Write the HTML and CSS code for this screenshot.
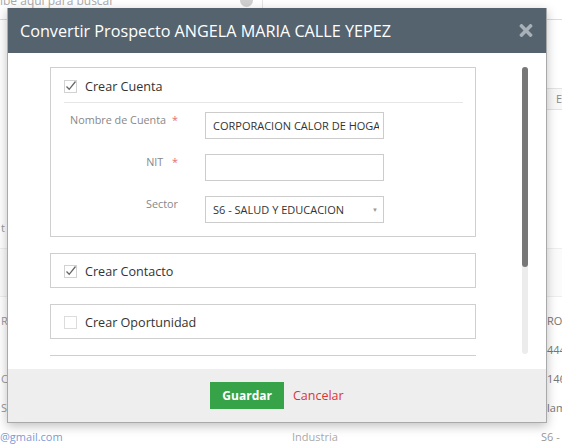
FILE: index.html
```html
<!DOCTYPE html>
<html>
<head>
  <title>Convertir Prospecto</title>
  <link rel="stylesheet" href="styles.css">
</head>
<body>
  <div class="page">
    <div class="search-row">
      <span class="search-text">ibe aqui para buscar</span>
      <span class="search-clear"></span>
      <span class="search-divider"></span>
    </div>
    <div class="bg-tools">
      <span class="bg-btn">E</span>
    </div>
    <div class="bg-gap"></div>
    <div class="bg-row"><span class="bg-left">t</span><span class="bg-mid"></span><span class="bg-right"></span></div>
    <div class="bg-head"></div>
    <div class="bg-gap2"></div>
    <div class="bg-row"><span class="bg-left">R</span><span class="bg-mid"></span><span class="bg-right">RO</span></div>
    <div class="bg-row"><span class="bg-left"></span><span class="bg-mid"></span><span class="bg-right">444</span></div>
    <div class="bg-row"><span class="bg-left">CA</span><span class="bg-mid"></span><span class="bg-right">146</span></div>
    <div class="bg-row"><span class="bg-left">S</span><span class="bg-mid"></span><span class="bg-right">lam</span></div>
    <div class="bg-row"><span class="bg-left bg-link">@gmail.com</span><span class="bg-mid">Industria</span><span class="bg-right bg-flush">S6 -</span></div>
  </div>

  <div class="modal">
    <div class="modal-header">
      <div class="modal-title">Convertir Prospecto ANGELA MARIA CALLE YEPEZ</div>
      <svg class="modal-close" viewBox="0 80 352 352" fill="currentColor">
        <path d="M242.72 256l100.07-100.07c12.28-12.28 12.28-32.19 0-44.48l-22.24-22.24c-12.28-12.28-32.19-12.28-44.48 0L176 189.28 75.93 89.21c-12.28-12.28-32.19-12.28-44.48 0L9.21 111.45c-12.28 12.28-12.28 32.19 0 44.48L109.28 256 9.21 356.07c-12.28 12.28-12.28 32.19 0 44.48l22.24 22.24c12.28 12.28 32.2 12.28 44.48 0L176 322.72l100.07 100.07c12.28 12.28 32.2 12.28 44.48 0l22.24-22.24c12.28-12.28 12.28-32.19 0-44.48L242.72 256z"/>
      </svg>
    </div>
    <div class="modal-body">
      <div class="scroll-view">
        <div class="panel">
          <div class="panel-head panel-head-lg">
            <svg class="check" viewBox="0 0 13 13">
              <rect x="0.5" y="0.5" width="12" height="12" fill="#fff" stroke="#d2d2d2"/>
              <path d="M2.5 6.5 L5.2 9.3 L11.5 1.5" fill="none" stroke="#666" stroke-width="1.3"/>
            </svg>
            Crear Cuenta
          </div>
          <div class="panel-sep"></div>
          <div class="form-grid">
            <div class="form-label">Nombre de Cuenta<span class="req">*</span></div>
            <div class="field"><span class="field-text">CORPORACION CALOR DE HOGAR</span></div>
            <div class="form-label">NIT <span class="req">*</span></div>
            <div class="field"></div>
            <div class="form-label">Sector</div>
            <div class="field field-select">
              <span class="field-text">S6 - SALUD Y EDUCACION</span>
              <span class="caret">&#9660;</span>
            </div>
          </div>
        </div>
        <div class="panel">
          <div class="panel-head">
            <svg class="check" viewBox="0 0 13 13">
              <rect x="0.5" y="0.5" width="12" height="12" fill="#fff" stroke="#d2d2d2"/>
              <path d="M2.5 6.5 L5.2 9.3 L11.5 1.5" fill="none" stroke="#666" stroke-width="1.3"/>
            </svg>
            Crear Contacto
          </div>
        </div>
        <div class="panel">
          <div class="panel-head">
            <svg class="check" viewBox="0 0 13 13">
              <rect x="0.5" y="0.5" width="12" height="12" fill="#fff" stroke="#dcdcdc"/>
            </svg>
            Crear Oportunidad
          </div>
        </div>
        <div class="panel">
          <div class="panel-head"></div>
        </div>
      </div>
      <div class="scrollbar"><div class="scroll-thumb"></div></div>
    </div>
    <div class="modal-footer">
      <button class="btn-save">Guardar</button>
      <a class="btn-cancel">Cancelar</a>
    </div>
  </div>
</body>
</html>
```

FILE: styles.css
```css
* {
  box-sizing: border-box;
}

body {
  margin: 0;
  background: #fff;
  color: #333;
  font-family: 'Open Sans', 'Liberation Sans', sans-serif;
}

/* page behind the dialog */
.page {
  height: 447px;
  overflow: hidden;
  font-size: 11px;
  color: #999;
}

.search-row {
  display: flex;
  align-items: flex-start;
  height: 20px;
  border-bottom: 1px solid #ecd6ce;
}

.search-text {
  width: 240px;
  margin-top: -7px;
  font-size: 12px;
  line-height: 16px;
  color: #aaa;
}

.search-clear {
  width: 13px;
  height: 13px;
  margin-top: -6px;
  border-radius: 50%;
  background: #d0d0d0;
}

.search-divider {
  width: 1px;
  height: 9px;
  margin-left: 9px;
  background: #e5e5e5;
}

.bg-tools {
  display: flex;
  justify-content: flex-end;
  height: 90px;
  padding-top: 68px;
}

.bg-btn {
  width: 16px;
  height: 22px;
  padding-left: 9px;
  border: 1px solid #e3e3e3;
  border-right: none;
  background: #f8f8f8;
  line-height: 20px;
  color: #888;
  overflow: hidden;
}

.bg-gap {
  height: 103px;
}

.bg-gap2 {
  height: 9px;
}

.bg-row {
  display: flex;
  height: 29px;
  line-height: 29px;
  white-space: nowrap;
}

.bg-left {
  flex-shrink: 0;
  width: 292px;
  padding-left: 1px;
}

.bg-mid {
  flex-shrink: 0;
  width: 249px;
  color: #aaa;
}

.bg-right {
  flex: 1;
  min-width: 0;
  padding-left: 6px;
  color: #777;
}

.bg-right.bg-flush {
  padding-left: 0;
  color: #999;
}

.bg-link {
  color: #7b9bd8;
  padding-left: 0;
}

.bg-head {
  height: 49px;
  margin-top: 6px;
  border-top: 1px solid #eee;
  border-bottom: 1px solid #eee;
  background: #fbfbfb;
}

/* dialog */
.modal {
  position: absolute;
  top: 8px;
  left: 7px;
  width: 540px;
  background: #fff;
  border: 1px solid #a9a9a9;
  border-top: none;
  box-shadow: 0 3px 10px rgba(0, 0, 0, 0.25);
}

.modal-header {
  display: flex;
  align-items: center;
  justify-content: space-between;
  height: 45px;
  padding: 0 13px 0 12px;
  background: #55636f;
}

.modal-title {
  font-size: 16.2px;
  color: #fff;
}

.modal-close {
  width: 14px;
  height: 13px;
  color: #a9b1b8;
}

.modal-body {
  display: flex;
  align-items: flex-start;
  height: 316px;
  padding: 14px 0 0 42px;
}

.scroll-view {
  width: 426px;
  height: 289px;
  overflow: hidden;
}

.scrollbar {
  width: 6px;
  height: 287px;
  margin-left: 46px;
  border-radius: 3px;
  background: #ececec;
}

.scroll-thumb {
  height: 200px;
  border-radius: 3px;
  background: #777;
}

.panel {
  margin-bottom: 16px;
  border: 1px solid #cfcfcf;
}

.panel-head {
  display: flex;
  align-items: center;
  height: 33px;
  padding: 2px 0 0 13px;
  font-size: 12.6px;
  color: #333;
}

.panel-head-lg {
  height: 34px;
}

.check {
  width: 13px;
  height: 13px;
  margin-right: 8px;
  flex-shrink: 0;
}

.panel-sep {
  height: 1px;
  margin: 0 12px 0 13px;
  background: #e6e6e6;
}

.form-grid {
  display: grid;
  grid-template-columns: 127px 179px;
  column-gap: 27px;
  row-gap: 15px;
  padding: 9px 0 13px 0;
}

.form-label {
  font-size: 10.8px;
  line-height: 16px;
  text-align: right;
  color: #888;
}

.req {
  margin-left: 6px;
  color: #e07070;
}

.field {
  display: flex;
  align-items: center;
  height: 27px;
  padding: 0 4px 0 7px;
  border: 1px solid #ccc;
  font-size: 11px;
  color: #333;
  white-space: nowrap;
}

.field-text {
  min-width: 0;
  overflow: hidden;
}

.field-select {
  justify-content: space-between;
  padding-right: 5px;
}

.caret {
  font-size: 6px;
  color: #999;
}

.modal-footer {
  display: flex;
  align-items: center;
  justify-content: center;
  gap: 9px;
  height: 53px;
  background: #eee;
}

.btn-save {
  height: 27px;
  padding: 0 12px;
  border: none;
  background: #37a349;
  color: #fff;
  font-family: inherit;
  font-size: 12px;
  font-weight: 700;
}

.btn-cancel {
  font-size: 12.5px;
  color: #d9343c;
  cursor: pointer;
}
```
